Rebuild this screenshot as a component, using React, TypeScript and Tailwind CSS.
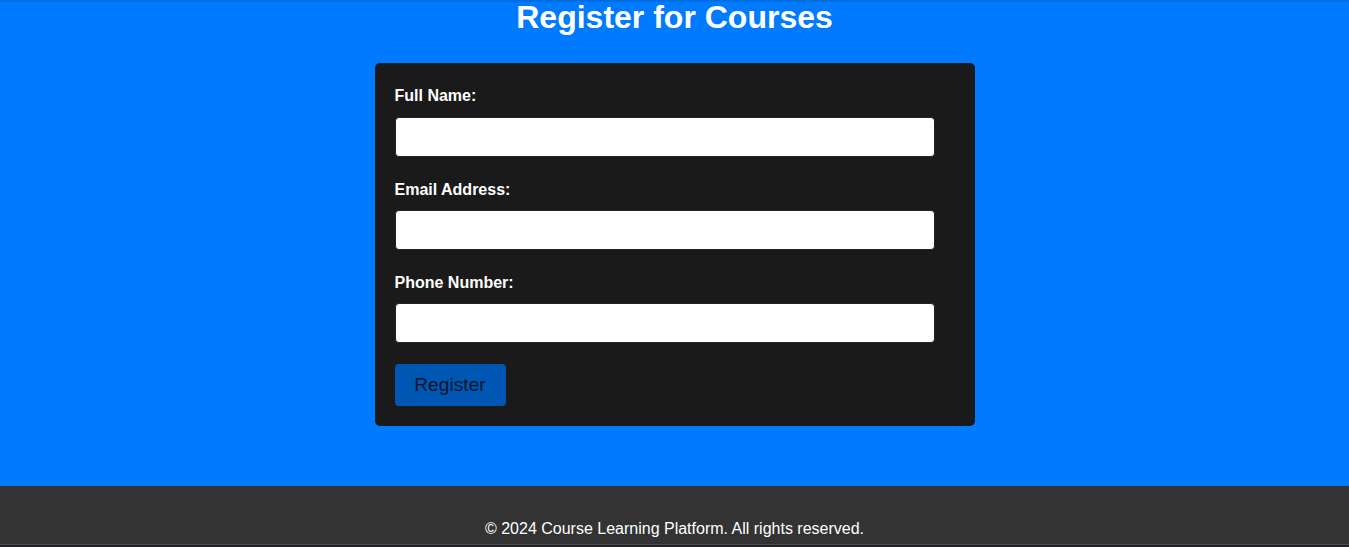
const fields = [
  { label: "Full Name:", type: "text" },
  { label: "Email Address:", type: "email" },
  { label: "Phone Number:", type: "tel" },
];

export default function App() {
  return (
    <div className="min-h-screen font-['Liberation_Sans',Arial,sans-serif] bg-[#007bff]">
      <main className="h-[486px] bg-[#007bff] shadow-[inset_0_3px_3px_-2px_rgba(0,0,0,0.2)] flex flex-col items-center">
        <h1 className="text-[32px] leading-[34px] font-bold text-white text-center">
          Register for Courses
        </h1>
        <form
          className="mt-[29px] w-[600px] bg-[#1b1a1b] rounded-[5px] px-5 pt-[24px] pb-5"
          onSubmit={(e) => e.preventDefault()}
        >
          {fields.map((f, i) => (
            <div key={i} className={i < fields.length - 1 ? "mb-[24px]" : "mb-[21px]"}>
              <label
                className={
                  i === 0
                    ? "block text-white font-bold text-[16px] leading-[18px] mb-[12px]"
                    : "block text-white font-bold text-[16px] leading-[18px] mb-[11px]"
                }
              >
                {f.label}
              </label>
              <input
                type={f.type}
                className="block w-[540px] h-10 bg-white border border-[#222] rounded-[4px] px-2 outline-none"
              />
            </div>
          ))}
          <button
            type="submit"
            className="h-[42px] w-[111px] bg-[#0056b3] text-[#0b1526] text-[19.2px] rounded-[4px]"
          >
            Register
          </button>
        </form>
      </main>
      <footer className="h-[58px] bg-[#333] pt-[34px] text-center text-white text-[16px] leading-[18px]">
        © 2024 Course Learning Platform. All rights reserved.
      </footer>
      <div className="h-px bg-[#4a4a4a]" />
      <div className="h-[4px] bg-[#222226]" />
    </div>
  );
}
